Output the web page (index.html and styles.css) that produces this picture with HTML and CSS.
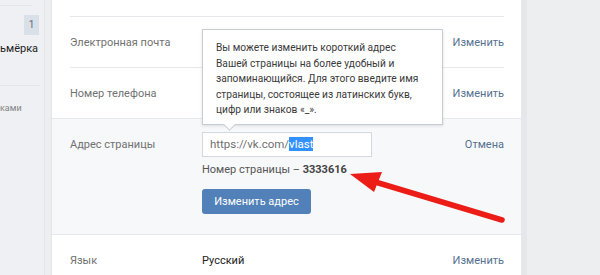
FILE: index.html
```html
<!DOCTYPE html>
<html lang="ru">
<head>
  <meta charset="UTF-8" />
  <title>Настройки</title>
  <link rel="stylesheet" href="styles.css">
</head>
<body>

  <div class="side">
    <div class="side-line"></div>
    <div class="side-counter"><span class="badge">1</span></div>
    <div class="side-item">ьмёрка</div>
    <div class="side-sep"></div>
    <div class="side-small">ками</div>
  </div>

  <div class="panel">
    <div class="top-gap"></div>

    <div class="row">
      <div class="label">Электронная почта</div>
      <div class="value"></div>
      <a class="action">Изменить</a>
    </div>

    <div class="row">
      <div class="label">Номер телефона</div>
      <div class="value"></div>
      <a class="action">Изменить</a>
    </div>

    <div class="row-open">
      <div class="label">Адрес страницы</div>
      <div class="value">
        <div class="field"><span class="prefix">https://vk.com/</span><span class="selected">vlast</span></div>
        <div class="page-id">Номер страницы – <b>3333616</b></div>
        <button class="btn">Изменить адрес</button>
      </div>
      <a class="action">Отмена</a>

      <!-- tooltip over the rows above -->
      <div class="tip">
        Вы можете изменить короткий адрес<br>
        Вашей страницы на более удобный и<br>
        запоминающийся. Для этого введите имя<br>
        страницы, состоящее из латинских букв,<br>
        цифр или знаков «_».
      </div>

      <svg class="arrow" width="170" height="70" viewBox="0 0 170 70">
        <line x1="152" y1="57" x2="22" y2="18" stroke="#ec1c16" stroke-width="5.5" stroke-linecap="round"/>
        <polygon points="0,11 32,9 24,29" fill="#ec1c16"/>
      </svg>
    </div>

    <div class="row row-last">
      <div class="label">Язык</div>
      <div class="value lang">Русский</div>
      <a class="action">Изменить</a>
    </div>
  </div>

  <div class="right"></div>

</body>
</html>
```

FILE: styles.css
```css
body {
  margin: 0;
  height: 275px;
  overflow: hidden;
  display: flex;
  background: #edeef0;
  font-family: Roboto, 'Open Sans', sans-serif;
  font-size: 11px;
  color: #222;
}

/* Left menu */
.side {
  width: 44px;
  flex: none;
  overflow: hidden;
  background: #eef0f3;
  border-right: 1px solid #e4e6ea;
}

.side-line {
  height: 1px;
  margin: 5px 12px 0 0;
  background: #e2e4e8;
}

.side-counter {
  display: flex;
  justify-content: flex-end;
  padding: 9px 5px 0 0;
}

.badge {
  width: 15px;
  height: 20px;
  line-height: 20px;
  text-align: center;
  background: #d9e0e8;
  color: #5a6c80;
  font-size: 10px;
}

.side-item {
  white-space: nowrap;
  color: #222;
  font-size: 11px;
  padding-top: 7px;
}

.side-sep {
  height: 1px;
  background: #e2e4e8;
  margin: 30px 4px 0 0;
}

.side-small {
  white-space: nowrap;
  color: #828282;
  font-size: 9px;
  padding-top: 17px;
}

/* Settings panel */
.panel {
  width: 469px;
  margin-left: 7px;
  flex: none;
  background: #fff;
  box-shadow: 0 0 0 1px #e3e4e8;
}

.top-gap {
  height: 16px;
}

.row {
  display: flex;
  align-items: center;
  height: 50px;
  margin: 0 17px 0 18px;
  border-top: 1px solid #e7e8ec;
}

.row-last {
  border-top: none;
}

.label {
  width: 132px;
  flex: none;
  color: #717171;
}

.value {
  flex: 1;
}

.action {
  color: #55708f;
  cursor: pointer;
}

.lang {
  color: #222;
}

.row-open {
  position: relative;
  display: flex;
  align-items: flex-start;
  height: 117px;
  padding: 19px 17px 0 18px;
  box-sizing: border-box;
  background: #f7f8fa;
  border-top: 1px solid #e7e8ec;
  border-bottom: 1px solid #e7e8ec;
}

.row-open .value {
  margin-top: -6px;
}

.field {
  width: 154px;
  height: 23px;
  line-height: 23px;
  padding: 0 7px;
  background: #fff;
  border: 1px solid #d3d9de;
  color: #707070;
  font-size: 11.5px;
}

.selected {
  background: #3390ff;
  color: #fff;
}

.page-id {
  margin-top: 6px;
  color: #555;
}

.page-id b {
  color: #444;
}

.btn {
  margin-top: 13px;
  width: 109px;
  height: 25px;
  border: none;
  border-radius: 3px;
  background: #5181b8;
  color: #fff;
  font-family: Roboto, sans-serif;
  font-size: 11px;
}

.tip {
  position: absolute;
  left: 150px;
  top: -90px;
  width: 214px;
  padding: 10px 12px 6px 13px;
  background: #fff;
  border: 1px solid #c5ccd4;
  box-shadow: 0 1px 3px rgba(0,0,0,0.12);
  color: #3a3a3a;
  font-size: 10.2px;
  line-height: 15.5px;
  white-space: nowrap;
}

.tip::after {
  content: '';
  position: absolute;
  left: 22px;
  bottom: -5px;
  width: 8px;
  height: 8px;
  background: #fff;
  border-right: 1px solid #c5ccd4;
  border-bottom: 1px solid #c5ccd4;
  transform: rotate(45deg);
}

.arrow {
  position: absolute;
  left: 298px;
  top: 44px;
}

/* Right column */
.right {
  flex: 1;
  border-left: 6px solid #e6e7ea;
}
```
